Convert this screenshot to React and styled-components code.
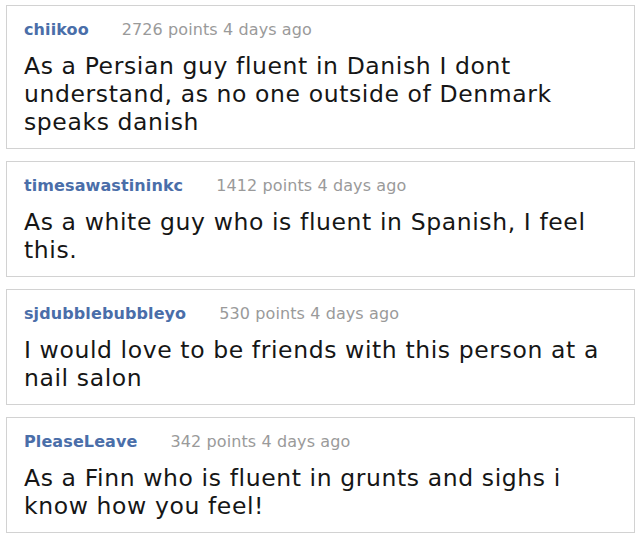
import React from "react";
import styled, { createGlobalStyle } from "styled-components";

const comments = [
  {
    user: "chiikoo",
    points: 2726,
    age: "4 days ago",
    text: "As a Persian guy fluent in Danish I dont understand, as no one outside of Denmark speaks danish",
  },
  {
    user: "timesawastininkc",
    points: 1412,
    age: "4 days ago",
    text: "As a white guy who is fluent in Spanish, I feel this.",
  },
  {
    user: "sjdubblebubbleyo",
    points: 530,
    age: "4 days ago",
    text: "I would love to be friends with this person at a nail salon",
  },
  {
    user: "PleaseLeave",
    points: 342,
    age: "4 days ago",
    text: "As a Finn who is fluent in grunts and sighs i know how you feel!",
  },
];

const GlobalStyle = createGlobalStyle`
  body {
    margin: 0;
    background: #ffffff;
    font-family: "DejaVu Sans", Verdana, sans-serif;
  }
`;

const List = styled.div`
  display: flex;
  flex-direction: column;
  gap: 12px;
  padding: 5px 5px 0 6px;
`;

const Card = styled.div`
  border: 1px solid #d2d2d2;
  background: #ffffff;
  padding: 14px 17px 12px 17px;
`;

const Header = styled.div`
  display: flex;
  align-items: baseline;
  height: 20px;
  line-height: 20px;
`;

const User = styled.span`
  font-weight: 700;
  font-size: 16px;
  letter-spacing: 0.1px;
  color: #4a6ea9;
  margin-right: 33px;
`;

const Meta = styled.span`
  font-size: 16px;
  letter-spacing: 0.1px;
  color: #9a9a9a;
`;

const Body = styled.p`
  margin: 12px 0 0 0;
  font-size: 23.5px;
  letter-spacing: 0.6px;
  line-height: 28px;
  color: #161616;
`;

const Comment = ({ user, points, age, text }) => (
  <Card>
    <Header>
      <User>{user}</User>
      <Meta>
        {points} points {age}
      </Meta>
    </Header>
    <Body>{text}</Body>
  </Card>
);

const App = () => (
  <>
    <GlobalStyle />
    <List>
      {comments.map((c) => (
        <Comment key={c.user} {...c} />
      ))}
    </List>
  </>
);

export default App;
